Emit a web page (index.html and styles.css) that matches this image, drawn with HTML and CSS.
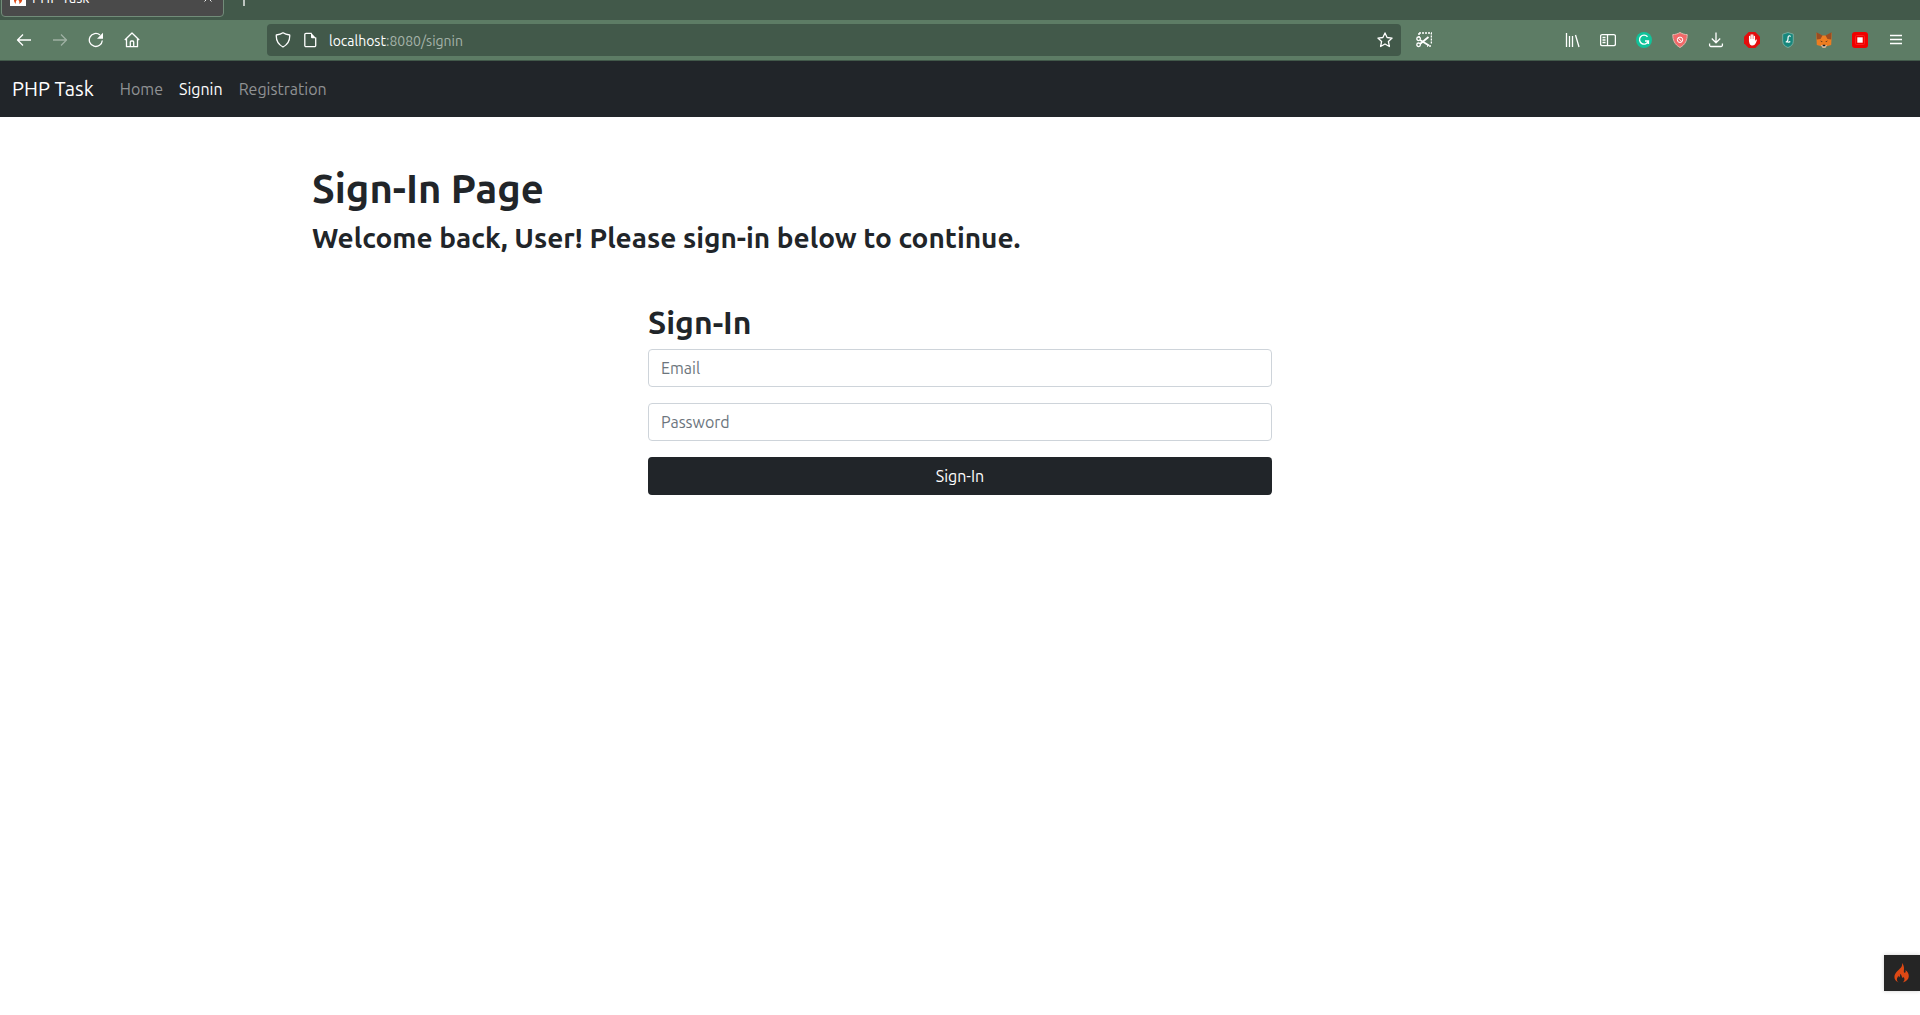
FILE: index.html
```html
<!DOCTYPE html>
<html lang="en">
<head>
<meta charset="utf-8">
<title>PHP Task</title>
<link rel="stylesheet" href="styles.css">
</head>
<body>
<div class="browser">
  <div class="tabstrip">
    <div class="tab">
      <svg class="favicon" width="16" height="16" viewBox="0 0 16 16"><rect width="16" height="16" fill="#fff"/><path d="M8 1c1 3-4 5-4 9 0 2 1 3 2 4-1-3 1-3 1-5 2 1 3 3 2 5 2-1 4-3 3-6-1-3-4-4-4-7z" fill="#dd4814"/></svg>
      <span class="tab-title">PHP Task</span>
      <button class="tab-close" aria-label="Close tab"><svg width="10" height="10" viewBox="0 0 10 10"><path d="M1.500 1.500l7 7M8.500 1.500l-7 7" stroke="#eee"/></svg></button>
    </div>
    <button class="new-tab" aria-label="New tab"><svg width="16" height="16" viewBox="0 0 16 16"><path d="M8 1v14M1 8h14" stroke="#fff" stroke-width="1.300"/></svg></button>
  </div>
  <div class="toolbar">
    <button class="tool" aria-label="Back"><svg width="16" height="16" viewBox="0 0 16 16"><path d="M15 8H1.500M7 2.500L1.500 8 7 13.500" class="line"/></svg></button>
    <button class="tool dim" aria-label="Forward"><svg width="16" height="16" viewBox="0 0 16 16"><path d="M1 8h13.500M9 2.500L14.500 8 9 13.500" class="line"/></svg></button>
    <button class="tool" aria-label="Reload"><svg width="16" height="16" viewBox="0 0 16 16"><path d="M14.300 8.500A6.500 6.500 0 1 1 12 3" class="line"/><path d="M15 .8v6H9z" fill="#fff"/></svg></button>
    <button class="tool" aria-label="Home"><svg width="16" height="16" viewBox="0 0 16 16"><path d="M.8 8L8 1l7.200 7M2.500 6.500v8.200h11V6.500M6.300 14.500V10a1 1 0 0 1 1-1h1.400a1 1 0 0 1 1 1v4.500" class="line"/></svg></button>
    <div class="urlbar">
      <svg width="16" height="16" viewBox="0 0 16 16"><path d="M8 .8C6 2.300 3.500 2.800 1.300 3c-.3 5 1.700 9.500 6.700 12 5-2.500 7-7 6.700-12C12.500 2.800 10 2.300 8 .8z" class="line"/></svg>
      <svg width="16" height="16" viewBox="0 0 16 16"><path d="M9.500 1.300H4a1.200 1.200 0 0 0-1.200 1.200v11a1.200 1.200 0 0 0 1.200 1.200h8.500a1.200 1.200 0 0 0 1.200-1.200V5.500" class="line"/><path d="M9 .8l5.200 5.400H10a1 1 0 0 1-1-1z" fill="#fff"/></svg>
      <div class="address"><span class="host">localhost</span>:8080/signin</div>
      <button class="star" aria-label="Bookmark"><svg width="16" height="16" viewBox="0 0 16 16"><path d="M8 .9l2.100 4.600 5 .6-3.700 3.400 1 5L8 12l-4.400 2.500 1-5L.9 6.100l5-.6z" class="line"/></svg></button>
    </div>
    <button class="tool clip" aria-label="Screenshot"><svg width="16" height="16" viewBox="0 0 16 16"><path d="M3 1h12.500v11" fill="none" stroke="#fff" stroke-width="1.600" stroke-dasharray="2 1"/><path d="M3 1v4M15 14h-4" fill="none" stroke="#fff" stroke-width="1.500" stroke-dasharray="2 1"/><circle cx="2.600" cy="6.800" r="1.800" class="line"/><circle cx="2.600" cy="12.800" r="1.800" class="line"/><path d="M4 8l9 5.500M4 12l8.500-7" fill="none" stroke="#fff" stroke-width="1.800"/></svg></button>
    <div class="extensions">
      <button class="tool" aria-label="Library"><svg width="16" height="16" viewBox="0 0 16 16"><path d="M2.500 1v14M5.500 4v11M8.500 4v11M11.500 3l3.500 12" class="line"/></svg></button>
      <button class="tool" aria-label="Sidebars"><svg width="16" height="16" viewBox="0 0 16 16"><rect x=".6" y="2.600" width="14.800" height="11" rx="1.500" class="line"/><path d="M7.500 2.600v11M2.500 5.500h3M2.500 8h3M2.500 10.500h3" class="line"/></svg></button>
      <button class="tool" aria-label="Grammar checker"><svg width="16" height="16" viewBox="0 0 16 16"><circle cx="8" cy="8" r="8" fill="#11c39a"/><path d="M11.500 4.800A4.500 4.500 0 1 0 12.300 9H9M12.400 9v3" fill="none" stroke="#fff" stroke-width="1.400"/></svg></button>
      <button class="tool" aria-label="Shield"><svg width="16" height="16" viewBox="0 0 16 16"><path d="M8 .5C5.500 2 3 2.600.8 2.600.8 8 2.500 12.500 8 15.500c5.500-3 7.200-7.500 7.200-12.900C13 2.600 10.500 2 8 .5z" fill="#f26969" stroke="#e0b9ae"/><circle cx="8" cy="7.800" r="2.700" fill="none" stroke="#fff"/><path d="M6.200 6l3.600 3.600" stroke="#fff"/></svg></button>
      <button class="tool" aria-label="Downloads"><svg width="16" height="16" viewBox="0 0 16 16"><path d="M8 .5v10M3.800 6.500L8 10.700l4.200-4.200M1.600 11.500v1.700a1.300 1.300 0 0 0 1.300 1.300h10.200a1.300 1.300 0 0 0 1.300-1.300v-1.700" class="line"/></svg></button>
      <button class="tool" aria-label="Blocker"><svg width="16" height="16" viewBox="0 0 16 16"><path d="M4.700 0h6.600L16 4.700v6.600L11.300 16H4.700L0 11.300V4.700z" fill="#e40d0d"/><path d="M5.600 9V4.500M7.200 8V2.800M8.800 8V3M10.400 9V4.500" stroke="#fff" stroke-width="1.300" stroke-linecap="round"/><path d="M5 7h6v2l1-1.600 1 .4c-.8 2.600-1.500 5.700-4.500 5.700C5.800 13.500 5 11.500 5 7z" fill="#fff"/></svg></button>
      <button class="tool" aria-label="Script manager"><svg width="16" height="16" viewBox="0 0 16 16"><path d="M8 .5L2.700 2.200v7C2.700 12.500 5 14.500 8 15.500c3-1 5.300-3 5.300-6.300v-7z" fill="#17877c" stroke="#83b5a8" stroke-width=".8"/><path d="M10.300 4.800c0-1.600-2.200-1.300-2.200.5 0 2-.6 4.700-2.300 4.700 1.400-.7 2.800.9 4.500-.5" fill="none" stroke="#fff" stroke-width="1.200"/></svg></button>
      <button class="tool" aria-label="Wallet"><svg width="16" height="16" viewBox="0 0 16 16"><path d="M.5.700L6 3.500h4L15.500.700v6.300l-.3 6-4.700 1.300L9 15.700H7l-1.500-1.400L.8 13 .5 7z" fill="#ed7d20"/><path d="M.5.300L6.500 3.500 4.500 7l-3.700.4zM15.500.300L9.500 3.500l2 3.500 3.700.4z" fill="#9b4c21"/><path d="M4 8.500l2.500 1-.5.800zM12 8.500l-2.500 1 .5.800z" fill="#3d2c1e"/><path d="M5 13h6l-1.500 2.700h-3z" fill="#d9c4b0"/><path d="M6.800 12.700h2.400l.2 1.500H6.600z" fill="#1c1c1c"/></svg></button>
      <button class="tool" aria-label="Stop"><svg width="16" height="16" viewBox="0 0 16 16"><rect width="16" height="16" rx="3" fill="#f00000"/><rect x="3.500" y="3.500" width="9" height="9" rx="1" fill="none" stroke="#fb2020"/><rect x="5.300" y="5.300" width="5.400" height="5.400" fill="#fff"/></svg></button>
      <button class="tool" aria-label="Menu"><svg width="16" height="16" viewBox="0 0 16 16"><path d="M2 3.500h12M2 7.500h12M2 11.500h12" class="line"/></svg></button>
    </div>
  </div>
</div>
<nav class="navbar">
  <a class="brand" href="#">PHP Task</a>
  <a class="nav-link" href="#">Home</a>
  <a class="nav-link active" href="#">Signin</a>
  <a class="nav-link" href="#">Registration</a>
</nav>
<main class="container">
  <h1>Sign-In Page</h1>
  <h3>Welcome back, User! Please sign-in below to continue.</h3>
  <form class="signin">
    <h2>Sign-In</h2>
    <input class="field" type="email" placeholder="Email" aria-label="Email">
    <input class="field" type="password" placeholder="Password" aria-label="Password">
    <button class="submit" type="button">Sign-In</button>
  </form>
</main>
<button class="debug" aria-label="Debug toolbar"><svg width="18" height="22" viewBox="0 0 18 22"><path d="M9 1c.8 3.300-1.500 5.200-4 7.600-2.300 2.200-3.600 4-3.600 6.400 0 2.400 1.600 4.400 4.200 5.500-1.200-1-1.700-1.900-1.700-3.100 0-1.600 1.100-2.500 1.500-3.700.5.600.5 1.200.4 1.900 1.100-.7 1.700-2.300 1.100-3.900 2 1.100 1.700 2.800 2.400 3.900.6.900 1.200.2 1-.8 1.500 1.400 1.800 3.900-.6 5.700 3.800-1.100 6.100-3.400 6.100-6.300 0-2.600-1.200-4.600-3.400-6.200.6 1.500.3 2.500-.6 2.700-1.400.1-.9-1.900-.8-3.800C11.100 5 10.500 2.200 9 1z" fill="#dd4814"/></svg></button>
</body>
</html>
```
FILE: styles.css
```css
* {
  box-sizing: border-box;
}

body {
  margin: 0;
  background: #fff;
  color: #212529;
  font-family: Ubuntu, "Noto Sans", sans-serif;
  font-size: 16px;
  line-height: 24px;
}

button {
  padding: 0;
  border: 0;
  background: none;
  color: inherit;
  font: inherit;
}

a {
  text-decoration: none;
}

svg {
  display: block;
  flex: none;
}

.line {
  fill: none;
  stroke: #fff;
  stroke-width: 1.3;
  stroke-linejoin: round;
}

.tabstrip {
  display: flex;
  align-items: flex-end;
  height: 20px;
  padding: 0 1px 3px;
  overflow: hidden;
  background: #42594a;
}

.tab {
  display: flex;
  flex: none;
  align-items: center;
  gap: 6px;
  width: 223px;
  height: 36px;
  padding: 0 10px 2px 8px;
  border: 1px solid #728c79;
  border-radius: 4px;
  background: #4a4a4a;
  color: #fff;
  font-size: 14px;
}

.tab-title {
  flex: 1;
}

.new-tab {
  flex: none;
  height: 36px;
  margin-left: 12px;
}

.toolbar {
  display: flex;
  align-items: center;
  height: 41px;
  padding: 0 6px;
  border-bottom: 1px solid #42594a;
  background: #5d7c65;
}

.tool {
  display: flex;
  flex: none;
  align-items: center;
  justify-content: center;
  width: 36px;
  height: 32px;
}

.dim {
  opacity: 0.4;
}

.urlbar {
  display: flex;
  flex: 1;
  align-items: center;
  gap: 11px;
  height: 32px;
  margin: 0 5px 0 117px;
  padding: 0 8px;
  border-radius: 4px;
  background: #42594a;
}

.address {
  flex: 1;
  color: #a5b3a9;
  font-size: 14px;
  line-height: 26px;
  padding-top: 1px;
}

.host {
  color: #fff;
}

.extensions {
  display: flex;
  margin-left: 112px;
}

.navbar {
  display: flex;
  align-items: center;
  height: 56px;
  padding: 0 12px;
  background: #212529;
}

.brand {
  margin-right: 18px;
  color: #fff;
  font-size: 20px;
}

.nav-link {
  padding: 8px;
  color: #909294;
}

.active {
  color: #fff;
}

.container {
  max-width: 1320px;
  margin: 0 auto;
  padding: 48px 12px;
}

h1,
h2,
h3 {
  margin: 0 0 8px;
  font-weight: 600;
}

h1 {
  font-size: 40px;
  line-height: 48px;
}

h2 {
  font-size: 32px;
  line-height: 38px;
}

h3 {
  margin-bottom: 48px;
  font-size: 28px;
  line-height: 34px;
}

.signin {
  display: flex;
  flex-direction: column;
  width: calc(50% - 24px);
  margin: 0 auto;
}

.field {
  height: 38px;
  margin: 0 0 16px;
  padding: 0 12px;
  border: 1px solid #ced4da;
  border-radius: 4px;
  background: #fff;
  color: #212529;
  font: inherit;
}

.field::placeholder {
  color: #6c757d;
  opacity: 1;
}

.submit {
  height: 38px;
  border-radius: 4px;
  background: #212529;
  color: #fff;
}

.debug {
  position: fixed;
  right: 0;
  bottom: 24px;
  display: flex;
  align-items: center;
  justify-content: center;
  width: 36px;
  height: 36px;
  background: #252525;
  box-shadow: 0 0 4px #cfcfcf;
}
```
